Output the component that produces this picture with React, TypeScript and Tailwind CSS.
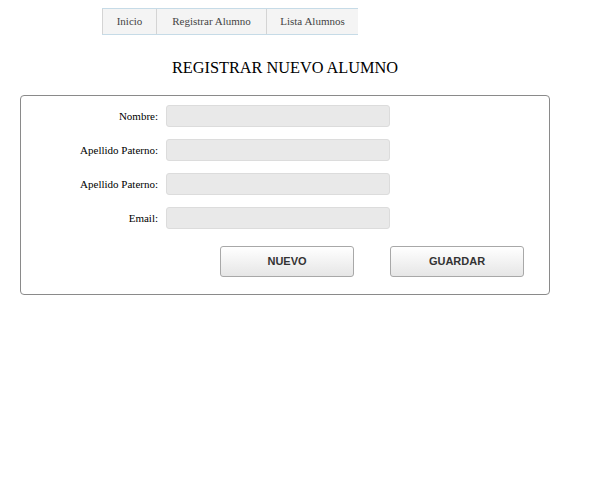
import React from "react";

const serif = { fontFamily: '"Liberation Serif", "Times New Roman", serif' };

const fields = ["Nombre:", "Apellido Paterno:", "Apellido Paterno:", "Email:"];

function NavTab({ label, width, first }: { label: string; width: string; first?: boolean }) {
  return (
    <div
      className={`flex h-full items-center justify-center border-r border-[#d4d4d4] text-[11px] text-[#444] ${width} ${first ? "border-l" : ""}`}
    >
      {label}
    </div>
  );
}

export default function App() {
  return (
    <div className="min-h-[482px] w-[601px] bg-white px-[20px]" style={serif}>
      <nav className="ml-[82px] mt-[8px] flex h-[27px] w-[256px] border-y border-[#c6dbe7] bg-[#f4f4f4]">
        <NavTab label="Inicio" width="w-[55px]" first />
        <NavTab label="Registrar Alumno" width="w-[110px]" />
        <div className="flex h-full w-[91px] items-center justify-center text-[11px] text-[#444]">
          Lista Alumnos
        </div>
      </nav>

      <h1 className="mt-[24px] w-[530px] text-center text-[16.3px] leading-[18px] text-black">
        REGISTRAR NUEVO ALUMNO
      </h1>

      <div className="mt-[18px] w-[530px] rounded-[4px] border border-[#8a8a8a] pb-[17px] pt-[9px]">
        <div className="flex flex-col gap-[12px]">
          {fields.map((f, i) => (
            <div key={i} className="flex items-center gap-[8px]">
              <label className="w-[137px] text-right text-[11px] text-black">{f}</label>
              <input
                type="text"
                className="h-[22px] w-[224px] rounded-[3px] border border-[#dcdcdc] bg-[#e9e9e9] outline-none"
              />
            </div>
          ))}
        </div>
        <div
          className="ml-[199px] mt-[17px] flex gap-[36px]"
          style={{ fontFamily: '"Liberation Sans", Arial, sans-serif' }}
        >
          {["NUEVO", "GUARDAR"].map((b) => (
            <button
              key={b}
              className="h-[31px] w-[134px] rounded-[3px] border border-[#a8a8a8] bg-gradient-to-b from-white to-[#e6e6e6] text-[11px] font-bold text-[#333]"
            >
              {b}
            </button>
          ))}
        </div>
      </div>
    </div>
  );
}
